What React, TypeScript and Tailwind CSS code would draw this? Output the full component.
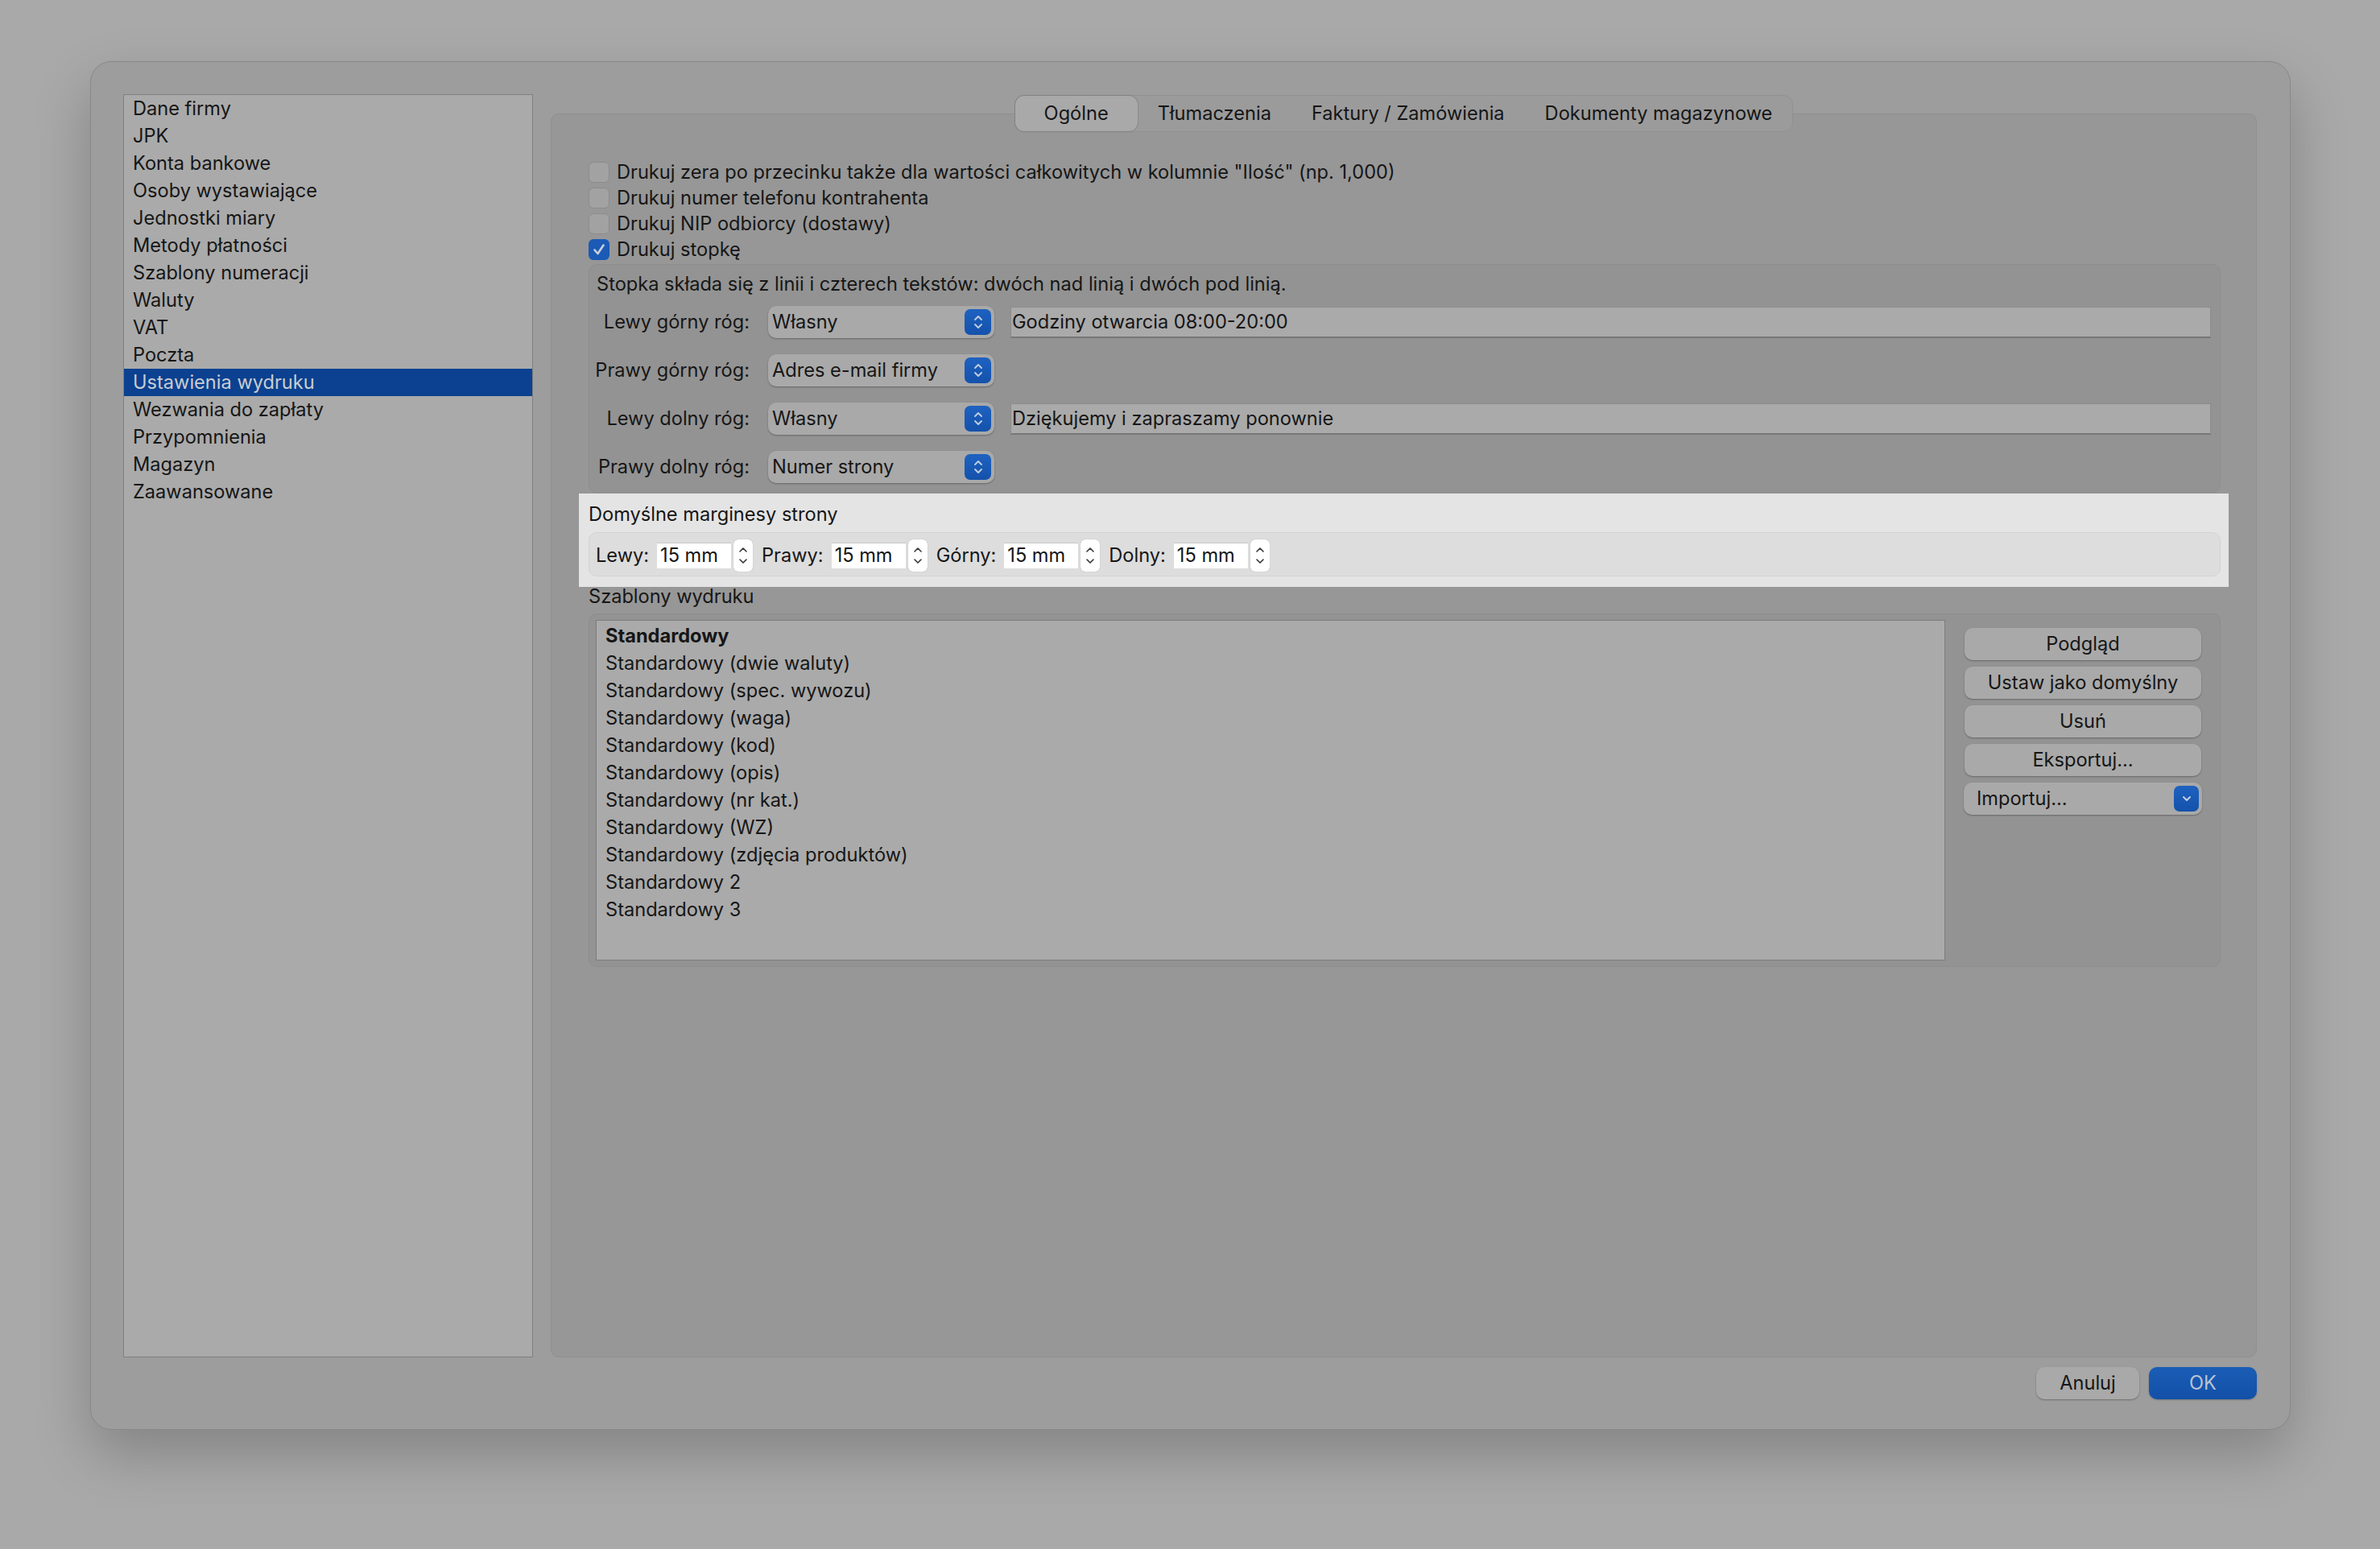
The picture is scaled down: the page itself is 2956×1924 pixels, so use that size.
import { ReactNode } from "react";

const sidebarItems = [
  "Dane firmy",
  "JPK",
  "Konta bankowe",
  "Osoby wystawiające",
  "Jednostki miary",
  "Metody płatności",
  "Szablony numeracji",
  "Waluty",
  "VAT",
  "Poczta",
  "Ustawienia wydruku",
  "Wezwania do zapłaty",
  "Przypomnienia",
  "Magazyn",
  "Zaawansowane",
];

const tabs = ["Ogólne", "Tłumaczenia", "Faktury / Zamówienia", "Dokumenty magazynowe"];

const checks = [
  { label: 'Drukuj zera po przecinku także dla wartości całkowitych w kolumnie "Ilość" (np. 1,000)', on: false },
  { label: "Drukuj numer telefonu kontrahenta", on: false },
  { label: "Drukuj NIP odbiorcy (dostawy)", on: false },
  { label: "Drukuj stopkę", on: true },
];

const corners = [
  { label: "Lewy górny róg:", value: "Własny", text: "Godziny otwarcia 08:00-20:00" },
  { label: "Prawy górny róg:", value: "Adres e-mail firmy" },
  { label: "Lewy dolny róg:", value: "Własny", text: "Dziękujemy i zapraszamy ponownie" },
  { label: "Prawy dolny róg:", value: "Numer strony" },
];

const margins = ["Lewy:", "Prawy:", "Górny:", "Dolny:"];

const templates = [
  "Standardowy",
  "Standardowy (dwie waluty)",
  "Standardowy (spec. wywozu)",
  "Standardowy (waga)",
  "Standardowy (kod)",
  "Standardowy (opis)",
  "Standardowy (nr kat.)",
  "Standardowy (WZ)",
  "Standardowy (zdjęcia produktów)",
  "Standardowy 2",
  "Standardowy 3",
];

function Checkbox({ on }: { on: boolean }) {
  if (on) {
    return (
      <div className="w-[26px] h-[26px] shrink-0 rounded-[6px] bg-[#1b5bb6] flex items-center justify-center">
        <svg width="18" height="18" viewBox="0 0 18 18">
          <path d="M3.5 9.5 L7.5 14 L14.5 3.5" fill="none" stroke="#c9d0dc" strokeWidth="2.6" strokeLinecap="round" strokeLinejoin="round" />
        </svg>
      </div>
    );
  }
  return <div className="w-[26px] h-[26px] shrink-0 rounded-[6px] bg-[#a2a2a2] border border-[#8c8c8c]" />;
}

function Popup({ value }: { value: string }) {
  return (
    <div className="w-[281px] h-[40px] shrink-0 rounded-[10px] bg-[#a9a9a9] shadow-[0_1px_2px_rgba(0,0,0,0.3)] flex items-center justify-between pl-[5px] pr-[4px]">
      <span className="whitespace-nowrap">{value}</span>
      <div className="w-[33px] h-[32px] rounded-[7px] bg-gradient-to-b from-[#1e62c0] to-[#1452ab] flex items-center justify-center">
        <svg width="14" height="22" viewBox="0 0 14 22">
          <path d="M3 8 L7 4 L11 8 M3 14 L7 18 L11 14" fill="none" stroke="#c3cfe2" strokeWidth="1.8" strokeLinecap="round" strokeLinejoin="round" />
        </svg>
      </div>
    </div>
  );
}

function Stepper() {
  return (
    <div className="w-[24px] h-[40px] rounded-[6px] bg-white shadow-[0_0_1px_rgba(0,0,0,0.35)] flex flex-col items-center justify-center gap-[4px]">
      <svg width="12" height="10" viewBox="0 0 12 10">
        <path d="M2 7 L6 3 L10 7" fill="none" stroke="#333" strokeWidth="1.6" strokeLinecap="round" strokeLinejoin="round" />
      </svg>
      <svg width="12" height="10" viewBox="0 0 12 10">
        <path d="M2 3 L6 7 L10 3" fill="none" stroke="#333" strokeWidth="1.6" strokeLinecap="round" strokeLinejoin="round" />
      </svg>
    </div>
  );
}

function Button({ children, className = "" }: { children: ReactNode; className?: string }) {
  return (
    <div className={`h-[40px] rounded-[10px] bg-[#a9a9a9] shadow-[0_1px_2px_rgba(0,0,0,0.3)] flex items-center justify-center ${className}`}>
      {children}
    </div>
  );
}

export default function App() {
  return (
    <div className="w-[2956px] h-[1924px] bg-[#a9a9a9] pl-[112px] pt-[76px] font-[Inter,'Liberation_Sans',sans-serif] text-[23.6px] text-[#161616] overflow-hidden">
      <div className="w-[2733px] h-[1700px] rounded-[26px] border border-[#898989] bg-[#9d9d9d] shadow-[0_30px_70px_rgba(0,0,0,0.22)] flex flex-col pl-[40px] pr-[41px] pt-[40px]">
        <div className="flex flex-1 gap-[22px] min-h-0">
          {/* sidebar */}
          <div className="w-[509px] bg-[#aaaaaa] border border-[#7f7f7f]">
            {sidebarItems.map((item) => (
              <div
                key={item}
                className={`h-[34px] flex items-center pl-[11px] ${item === "Ustawienia wydruku" ? "bg-[#0b4190] text-[#c9ccd2]" : ""}`}
              >
                {item}
              </div>
            ))}
          </div>

          {/* right side */}
          <div className="flex-1 flex flex-col pt-[1px]">
            <div className="self-center relative z-10 h-[46px] flex items-center rounded-[12px] bg-[#9b9b9b] border border-[#919191]">
              {tabs.map((t, i) => (
                <div
                  key={t}
                  className={
                    i === 0
                      ? "w-[152px] h-[44px] flex items-center justify-center rounded-[11px] bg-[#a9a9a9] shadow-[0_0_2px_rgba(0,0,0,0.35)]"
                      : "h-[44px] flex items-center px-[25px] whitespace-nowrap"
                  }
                >
                  {t}
                </div>
              ))}
            </div>

            <div className="-mt-[23px] flex-1 rounded-[10px] bg-[#979797] border border-[#8f8f8f] pt-[56px] pl-[46px] pr-[44px] flex flex-col">
              {checks.map((c) => (
                <div key={c.label} className="h-[32px] flex items-center gap-[9px]">
                  <Checkbox on={c.on} />
                  <span className="whitespace-nowrap">{c.label}</span>
                </div>
              ))}

              {/* stopka */}
              <div className="mt-[2px] rounded-[10px] bg-[#939393] border border-[#8d8d8d] pt-[12px] pb-[11px] pl-[9px] pr-[11px] flex flex-col gap-[20px]">
                <div className="h-[24px] flex items-center -mb-[5px] whitespace-nowrap">
                  Stopka składa się z linii i czterech tekstów: dwóch nad linią i dwóch pod linią.
                </div>
                {corners.map((r) => (
                  <div key={r.label} className="h-[40px] flex items-center">
                    <div className="w-[190px] shrink-0 text-right whitespace-nowrap flex justify-end">{r.label}</div>
                    <div className="ml-[23px] shrink-0">
                      <Popup value={r.value} />
                    </div>
                    {r.text && (
                      <div className="ml-[20px] flex-1 h-[39px] bg-[#aaaaaa] border border-[#8c8c8c] border-b-2 border-b-[#777777] flex items-center pl-[1px] whitespace-nowrap">
                        {r.text}
                      </div>
                    )}
                  </div>
                ))}
              </div>

              {/* highlighted margins */}
              <div className="mt-[1px] -ml-[12px] -mr-[10px] bg-[#e4e4e4] pl-[12px] pr-[10px] pt-[14px] pb-[13px]">
                <div className="h-[24px] flex items-center">Domyślne marginesy strony</div>
                <div className="mt-[10px] h-[55px] rounded-[10px] bg-[#dddddd] border border-[#d3d3d3] flex items-center pl-[8px] pt-[2px]">
                  {margins.map((m) => (
                    <div key={m} className="flex items-center mr-[11px]">
                      <span className="mr-[10px]">{m}</span>
                      <div className="w-[92px] h-[32px] bg-white border-t border-[#c8c8c8] flex items-center pl-[4px]">15 mm</div>
                      <div className="ml-[3px]">
                        <Stepper />
                      </div>
                    </div>
                  ))}
                </div>
              </div>

              <div className="h-[24px] flex items-center">Szablony wydruku</div>

              {/* templates */}
              <div className="mt-[9px] h-[439px] rounded-[10px] bg-[#939393] border border-[#8d8d8d] flex pl-[8px] pt-[7px] pb-[7px] pr-[23px] gap-[24px]">
                <div className="w-[1676px] bg-[#aaaaaa] border border-[#7d7d7d] pt-[2px] pl-[11px]">
                  {templates.map((t, i) => (
                    <div key={t} className={`h-[34px] flex items-center ${i === 0 ? "font-bold" : ""}`}>
                      {t}
                    </div>
                  ))}
                </div>
                <div className="flex-1 flex flex-col gap-[8px] pt-[10px]">
                  <Button>Podgląd</Button>
                  <Button>Ustaw jako domyślny</Button>
                  <Button>Usuń</Button>
                  <Button>Eksportuj...</Button>
                  <div className="h-[40px] -mx-[1px] rounded-[10px] bg-[#a9a9a9] shadow-[0_1px_2px_rgba(0,0,0,0.3)] flex items-center justify-between pl-[16px] pr-[4px]">
                    <span>Importuj...</span>
                    <div className="w-[31px] h-[32px] rounded-[7px] bg-gradient-to-b from-[#1e62c0] to-[#1452ab] flex items-center justify-center">
                      <svg width="14" height="10" viewBox="0 0 14 10">
                        <path d="M3 3 L7 7 L11 3" fill="none" stroke="#c3cfe2" strokeWidth="2" strokeLinecap="round" strokeLinejoin="round" />
                      </svg>
                    </div>
                  </div>
                </div>
              </div>
            </div>
          </div>
        </div>

        <div className="h-[40px] mt-[12px] mb-[37px] flex justify-end gap-[12px]">
          <Button className="w-[128px]">Anuluj</Button>
          <div className="w-[134px] h-[40px] rounded-[10px] bg-gradient-to-b from-[#1b5db5] to-[#1350a8] text-[#b9c3d3] flex items-center justify-center shadow-[0_1px_2px_rgba(0,0,0,0.25)]">
            OK
          </div>
        </div>
      </div>
    </div>
  );
}
